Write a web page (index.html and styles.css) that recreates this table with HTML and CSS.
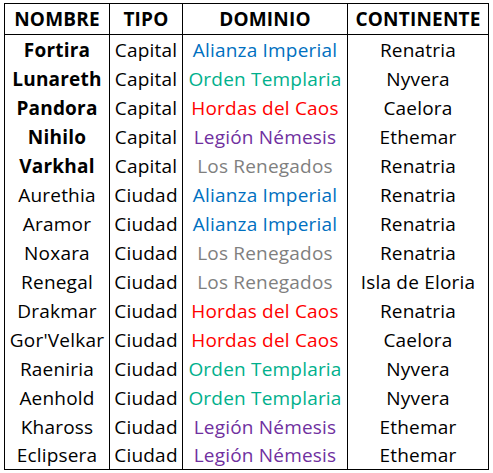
FILE: index.html
```
<!DOCTYPE html>
<html>
<head>
<meta charset="utf-8">
<link rel="stylesheet" href="styles.css">
</head>
<body>
<table class="grid">
  <colgroup>
    <col class="c-nombre">
    <col class="c-tipo">
    <col class="c-dominio">
    <col class="c-cont">
  </colgroup>
  <thead>
    <tr><th>NOMBRE</th><th>TIPO</th><th>DOMINIO</th><th>CONTINENTE</th></tr>
  </thead>
  <tbody>
    <tr><td class="cap">Fortira</td><td>Capital</td><td class="alianza">Alianza Imperial</td><td>Renatria</td></tr>
    <tr><td class="cap">Lunareth</td><td>Capital</td><td class="orden">Orden Templaria</td><td>Nyvera</td></tr>
    <tr><td class="cap">Pandora</td><td>Capital</td><td class="hordas">Hordas del Caos</td><td>Caelora</td></tr>
    <tr><td class="cap">Nihilo</td><td>Capital</td><td class="legion">Legión Némesis</td><td>Ethemar</td></tr>
    <tr><td class="cap">Varkhal</td><td>Capital</td><td class="reneg">Los Renegados</td><td>Renatria</td></tr>
    <tr><td>Aurethia</td><td>Ciudad</td><td class="alianza">Alianza Imperial</td><td>Renatria</td></tr>
    <tr><td>Aramor</td><td>Ciudad</td><td class="alianza">Alianza Imperial</td><td>Renatria</td></tr>
    <tr><td>Noxara</td><td>Ciudad</td><td class="reneg">Los Renegados</td><td>Renatria</td></tr>
    <tr><td>Renegal</td><td>Ciudad</td><td class="reneg">Los Renegados</td><td>Isla de Eloria</td></tr>
    <tr><td>Drakmar</td><td>Ciudad</td><td class="hordas">Hordas del Caos</td><td>Renatria</td></tr>
    <tr><td>Gor'Velkar</td><td>Ciudad</td><td class="hordas">Hordas del Caos</td><td>Caelora</td></tr>
    <tr><td>Raeniria</td><td>Ciudad</td><td class="orden">Orden Templaria</td><td>Nyvera</td></tr>
    <tr><td>Aenhold</td><td>Ciudad</td><td class="orden">Orden Templaria</td><td>Nyvera</td></tr>
    <tr><td>Khaross</td><td>Ciudad</td><td class="legion">Legión Némesis</td><td>Ethemar</td></tr>
    <tr><td>Eclipsera</td><td>Ciudad</td><td class="legion">Legión Némesis</td><td>Ethemar</td></tr>
  </tbody>
</table>
</body>
</html>
```
FILE: styles.css
```
html, body {
  margin: 0;
  padding: 0;
  background: #ffffff;
}
body {
  padding: 3px 0 0 4px;
  font-family: "Open Sans", Lato, sans-serif;
  font-size: 19px;
  letter-spacing: 0.2px;
  color: #000000;
}
.grid {
  border-collapse: collapse;
  table-layout: fixed;
  width: 484px;
}
.c-nombre { width: 105px; }
.c-tipo { width: 73px; }
.c-dominio { width: 165px; }
.c-cont { width: 141px; }
.grid th,
.grid td {
  padding: 0;
  text-align: center;
  white-space: nowrap;
  line-height: 20px;
}
.grid th {
  height: 30px;
  font-weight: bold;
  border: 1px solid #000000;
}
.grid td {
  height: 29px;
  border-left: 1px solid #000000;
  border-right: 1px solid #000000;
}
.grid tbody tr:last-child td {
  border-bottom: 1px solid #000000;
  height: 28px;
}
.grid td.cap { font-weight: bold; }
.alianza { color: #0070c0; }
.orden { color: #00b08c; }
.hordas { color: #ff0000; }
.legion { color: #7030a0; }
.reneg { color: #7f7f7f; }
```
